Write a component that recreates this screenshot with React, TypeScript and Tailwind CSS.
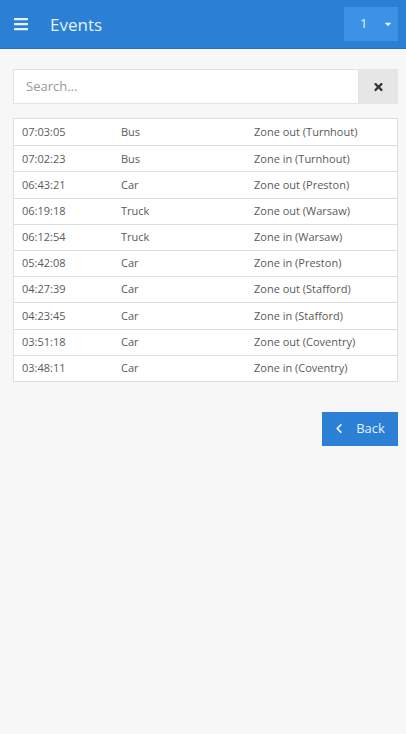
import React from 'react';
import { FaBars, FaTimes, FaChevronLeft, FaCaretDown } from 'react-icons/fa';

const events = [
  { time: '07:03:05', type: 'Bus', zone: 'Zone out (Turnhout)' },
  { time: '07:02:23', type: 'Bus', zone: 'Zone in (Turnhout)' },
  { time: '06:43:21', type: 'Car', zone: 'Zone out (Preston)' },
  { time: '06:19:18', type: 'Truck', zone: 'Zone out (Warsaw)' },
  { time: '06:12:54', type: 'Truck', zone: 'Zone in (Warsaw)' },
  { time: '05:42:08', type: 'Car', zone: 'Zone in (Preston)' },
  { time: '04:27:39', type: 'Car', zone: 'Zone out (Stafford)' },
  { time: '04:23:45', type: 'Car', zone: 'Zone in (Stafford)' },
  { time: '03:51:18', type: 'Car', zone: 'Zone out (Coventry)' },
  { time: '03:48:11', type: 'Car', zone: 'Zone in (Coventry)' },
];

export default function App() {
  return (
    <div className="min-h-[734px] bg-[#f7f7f7] font-['Open_Sans',sans-serif]">
      {/* Header */}
      <div className="h-[49px] bg-[#2b7fd4] border-b border-[#2570bd] flex items-center pl-[14px] pr-2">
        <FaBars className="w-[14px] h-[16px] text-[#e6f1fc]" />
        <h1 className="ml-[22px] text-[17px] text-[#e6f1fc] leading-none">Events</h1>
        <div className="ml-auto w-[54px] h-[34px] bg-[#3c92e6] flex items-center justify-between pl-[16px] pr-[6px] mt-[-1px]">
          <span className="text-[13px] text-[#e6f1fc]">1</span>
          <FaCaretDown className="w-[8px] h-[10px] text-[#e6f1fc]" />
        </div>
      </div>

      <div className="pl-[13px] pr-[8px] pt-[20px]">
        {/* Search */}
        <div className="flex h-[35px]">
          <div className="flex-1 bg-white border border-[#e3e3e3] flex items-center pl-[12px]">
            <span className="text-[13px] text-[#999]">Search...</span>
          </div>
          <button className="w-[39px] bg-[#e6e6e6] flex items-center justify-center">
            <FaTimes className="w-[11px] h-[12px] text-[#333]" />
          </button>
        </div>

        {/* Events table */}
        <div className="mt-[14px] bg-white border border-[#dedede]">
          {events.map((e, i) => (
            <div
              key={i}
              className={`flex items-center h-[26.2px] text-[11px] text-[#5a5a5a] ${i > 0 ? 'border-t border-[#dedede]' : ''}`}
            >
              <div className="w-[107px] pl-[8px]">{e.time}</div>
              <div className="w-[133px]">{e.type}</div>
              <div className="flex-1">{e.zone}</div>
            </div>
          ))}
        </div>

        {/* Back */}
        <div className="flex justify-end mt-[30px]">
          <button className="w-[76px] h-[34px] bg-[#2b7fd4] text-[#e6f1fc] text-[13px] flex items-center justify-center gap-[13px]">
            <FaChevronLeft className="w-[8px] h-[11px]" />
            <span>Back</span>
          </button>
        </div>
      </div>
    </div>
  );
}
